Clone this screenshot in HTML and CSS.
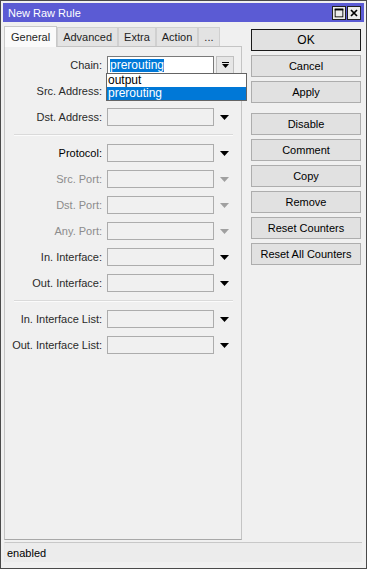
FILE: index.html
```html
<!DOCTYPE html>
<html>
<head>
<meta charset="utf-8">
<link rel="stylesheet" href="styles.css">
</head>
<body>
<div class="window">
  <div class="titlebar">
    <span class="title">New Raw Rule</span>
    <div class="tb-buttons">
      <span class="tb-btn"><svg width="14" height="14" viewBox="0 0 14 14"><rect x="2.5" y="2.5" width="9" height="9" fill="none" stroke="#000" stroke-width="1"/><rect x="2" y="2" width="10" height="2" fill="#000"/></svg></span>
      <span class="tb-btn"><svg width="14" height="14" viewBox="0 0 14 14"><path d="M3.5 3.5 L10.5 10.5 M10.5 3.5 L3.5 10.5" stroke="#000" stroke-width="2"/></svg></span>
    </div>
  </div>
  <div class="main">
    <div class="leftcol">
      <div class="tabs">
        <span class="tab active">General</span>
        <span class="tab">Advanced</span>
        <span class="tab">Extra</span>
        <span class="tab">Action</span>
        <span class="tab">...</span>
      </div>
      <div class="panel">
        <div class="row">
          <label class="lbl">Chain:</label>
          <div class="field active"><span class="sel">prerouting</span></div>
          <span class="ddbtn"><svg width="9" height="9" viewBox="0 0 9 9"><rect x="1" y="1" width="7" height="1" fill="#000"/><path d="M1 3 H8 L4.5 7 Z" fill="#000"/></svg></span>
          <div class="droplist">
            <div class="opt">output</div>
            <div class="opt hl">prerouting</div>
          </div>
        </div>
        <div class="row">
          <label class="lbl">Src. Address:</label>
          <div class="field"></div>
          <span class="arrow"></span>
        </div>
        <div class="row">
          <label class="lbl">Dst. Address:</label>
          <div class="field"></div>
          <span class="arrow"><svg width="9" height="5" viewBox="0 0 9 5"><path d="M0 0 H9 L4.5 5 Z" fill="#000"/></svg></span>
        </div>
        <div class="sep"></div>
        <div class="row">
          <label class="lbl strong">Protocol:</label>
          <div class="field"></div>
          <span class="arrow"><svg width="9" height="5" viewBox="0 0 9 5"><path d="M0 0 H9 L4.5 5 Z" fill="#000"/></svg></span>
        </div>
        <div class="row dis">
          <label class="lbl">Src. Port:</label>
          <div class="field"></div>
          <span class="arrow"><svg width="9" height="5" viewBox="0 0 9 5"><path d="M0 0 H9 L4.5 5 Z" fill="#a0a0a0"/></svg></span>
        </div>
        <div class="row dis">
          <label class="lbl">Dst. Port:</label>
          <div class="field"></div>
          <span class="arrow"><svg width="9" height="5" viewBox="0 0 9 5"><path d="M0 0 H9 L4.5 5 Z" fill="#a0a0a0"/></svg></span>
        </div>
        <div class="row dis">
          <label class="lbl">Any. Port:</label>
          <div class="field"></div>
          <span class="arrow"><svg width="9" height="5" viewBox="0 0 9 5"><path d="M0 0 H9 L4.5 5 Z" fill="#a0a0a0"/></svg></span>
        </div>
        <div class="row">
          <label class="lbl">In. Interface:</label>
          <div class="field"></div>
          <span class="arrow"><svg width="9" height="5" viewBox="0 0 9 5"><path d="M0 0 H9 L4.5 5 Z" fill="#000"/></svg></span>
        </div>
        <div class="row">
          <label class="lbl">Out. Interface:</label>
          <div class="field"></div>
          <span class="arrow"><svg width="9" height="5" viewBox="0 0 9 5"><path d="M0 0 H9 L4.5 5 Z" fill="#000"/></svg></span>
        </div>
        <div class="sep"></div>
        <div class="row">
          <label class="lbl">In. Interface List:</label>
          <div class="field"></div>
          <span class="arrow"><svg width="9" height="5" viewBox="0 0 9 5"><path d="M0 0 H9 L4.5 5 Z" fill="#000"/></svg></span>
        </div>
        <div class="row">
          <label class="lbl">Out. Interface List:</label>
          <div class="field"></div>
          <span class="arrow"><svg width="9" height="5" viewBox="0 0 9 5"><path d="M0 0 H9 L4.5 5 Z" fill="#000"/></svg></span>
        </div>
      </div>
    </div>
    <div class="rightcol">
      <div class="btn default">OK</div>
      <div class="btn">Cancel</div>
      <div class="btn">Apply</div>
      <div class="btn gap">Disable</div>
      <div class="btn">Comment</div>
      <div class="btn">Copy</div>
      <div class="btn">Remove</div>
      <div class="btn">Reset Counters</div>
      <div class="btn">Reset All Counters</div>
    </div>
  </div>
  <div class="status">enabled</div>
</div>
</body>
</html>
```
FILE: styles.css
```css
html, body {
  margin: 0;
  padding: 0;
  background: #9c9c9c;
}
.window {
  width: 367px;
  height: 569px;
  box-sizing: border-box;
  border: 1px solid #4a4a4a;
  padding: 2px;
  background: #f0f0f0;
  font-family: "Liberation Sans", Arial, sans-serif;
  font-size: 11px;
  color: #1e1e1e;
  display: flex;
  flex-direction: column;
  position: relative;
}
.titlebar {
  height: 19px;
  background: #5b5bd4;
  color: #fff;
  display: flex;
  align-items: center;
  justify-content: space-between;
  padding: 0 3px 0 5px;
  font-size: 11px;
}
.tb-buttons {
  display: flex;
  gap: 1px;
}
.tb-btn {
  width: 14px;
  height: 14px;
  background: #ececec;
  border: 1px solid #202020;
  box-sizing: border-box;
  display: flex;
  align-items: center;
  justify-content: center;
}
.tb-btn svg { display: block; }
.main {
  display: flex;
  padding: 4px 2px 0 1px;
  flex: 1;
}
.leftcol {
  width: 238px;
  display: flex;
  flex-direction: column;
}
.tabs {
  display: flex;
  height: 20px;
  align-items: flex-end;
}
.tab {
  height: 19px;
  box-sizing: border-box;
  border: 1px solid #d0d0d0;
  border-bottom: none;
  background: #e3e3e3;
  padding: 0 5px;
  display: flex;
  align-items: center;
  font-size: 11px;
  color: #1e1e1e;
}
.tab.active {
  height: 21px;
  background: #fafafa;
  border-color: #c8c8c8;
  padding: 0 6px;
  position: relative;
  z-index: 1;
  margin-bottom: -1px;
}
.panel {
  height: 494px;
  box-sizing: border-box;
  border: 1px solid #c4c4c4;
  border-bottom-color: #a8a8a8;
  padding: 9px 0 0 0;
  display: flex;
  flex-direction: column;
  gap: 8px;
  position: relative;
}
.row {
  display: flex;
  align-items: center;
  height: 18px;
  position: relative;
}
.lbl {
  width: 97px;
  text-align: right;
  margin-right: 5px;
  white-space: nowrap;
  color: #2a2a2a;
}
.lbl.strong { color: #000; }
.dis .lbl { color: #8c8c8c; }
.field {
  width: 107px;
  height: 18px;
  box-sizing: border-box;
  border: 1px solid #acacac;
  background: #f0f0f0;
}
.field.active {
  background: #fff;
  border-color: #7a7a7a;
  padding: 2px 2px;
  display: flex;
  align-items: center;
}
.sel {
  background: #0078d7;
  color: #fff;
  line-height: 13px;
  font-size: 12px;
}
.ddbtn {
  width: 18px;
  height: 18px;
  box-sizing: border-box;
  margin-left: 2px;
  border: 1px solid #c0c0c0;
  background: #e6e6e6;
  display: flex;
  align-items: center;
  justify-content: center;
}
.arrow {
  width: 9px;
  height: 5px;
  margin-left: 6px;
  display: flex;
}
.arrow svg { display: block; }
.droplist {
  position: absolute;
  left: 101px;
  top: 17px;
  width: 141px;
  box-sizing: border-box;
  border: 1px solid #646464;
  background: #fff;
  z-index: 5;
  font-size: 12px;
}
.opt {
  height: 13px;
  line-height: 13px;
  padding-left: 1px;
  color: #000;
}
.opt.hl {
  background: #0078d7;
  color: #fff;
}
.sep {
  height: 1px;
  background: #dadada;
  border-bottom: 1px solid #fbfbfb;
  margin: 0 8px 0 9px;
}
.rightcol {
  margin-left: 9px;
  width: 110px;
  padding-top: 3px;
  display: flex;
  flex-direction: column;
  gap: 4px;
}
.btn {
  height: 22px;
  box-sizing: border-box;
  border: 1px solid #adadad;
  background: #e1e1e1;
  display: flex;
  align-items: center;
  justify-content: center;
  font-size: 11px;
  color: #000;
}
.btn.default {
  border: 1px solid #1a1a1a;
  box-shadow: inset 0 0 0 1px #e1e1e1;
  font-size: 12px;
}
.btn.gap { margin-top: 6px; }
.status {
  margin: 2px 2px 4px 1px;
  height: 20px;
  box-sizing: border-box;
  border-top: 1px solid #c8c8c8;
  border-left: 1px solid #e8e8e8;
  background: #ececec;
  display: flex;
  align-items: center;
  padding-left: 2px;
  font-size: 11px;
  color: #000;
}
```
